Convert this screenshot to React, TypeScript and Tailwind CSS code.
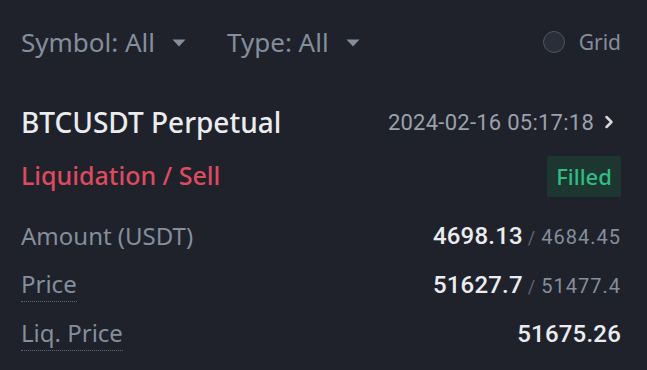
import React from 'react';
import { ChevronRight } from 'lucide-react';

const Caret = () => (
  <svg width="14" height="8" viewBox="0 0 14 8" className="ml-[17px]">
    <path d="M0.5 0.5 H13.5 L7 7.5 Z" fill="#848e9c" />
  </svg>
);

const Row = ({ label, dotted, value, sub }: { label: string; dotted?: boolean; value: string; sub?: string }) => (
  <div className="flex items-center justify-between h-[49px]">
    <span
      className={`text-[24px] text-[#848e9c] leading-[34px] ${dotted ? 'border-b border-dotted border-[#5e6673]' : ''}`}
    >
      {label}
    </span>
    <div className="flex items-baseline font-['Roboto',sans-serif]">
      <span className="text-[24px] font-medium text-[#eaecef] tracking-[0.2px]">{value}</span>
      {sub && (
        <>
          <span className="text-[18px] text-[#5e6673] ml-[5px] mr-[6px]">/</span>
          <span className="text-[20px] text-[#848e9c] tracking-[1px]">{sub}</span>
        </>
      )}
    </div>
  </div>
);

export default function App() {
  return (
    <div className="w-[647px] h-[370px] bg-[#1f222b] font-['Noto_Sans',sans-serif] pl-[21px] pr-[26px] overflow-hidden">
      <div className="flex items-center h-[85px]">
        <div className="flex items-center">
          <span className="text-[26px] text-[#848e9c]">Symbol: All</span>
          <Caret />
        </div>
        <div className="flex items-center ml-[41px]">
          <span className="text-[26px] text-[#848e9c]">Type: All</span>
          <Caret />
        </div>
        <div className="flex items-center ml-auto">
          <span className="w-[22px] h-[22px] rounded-full border border-[#4f5562] bg-[#2a2e39] -mt-[2px]" />
          <span className="text-[21px] text-[#848e9c] ml-[14px]">Grid</span>
        </div>
      </div>

      <div className="flex items-center justify-between h-[70px] pt-[4px]">
        <span className="text-[28px] font-medium text-[#eaecef]">BTCUSDT Perpetual</span>
        <div className="flex items-center text-[#9ba1ac]">
          <span className="text-[22px] font-['Roboto',sans-serif] tracking-[0.25px]">2024-02-16 05:17:18</span>
          <ChevronRight size={20} strokeWidth={3} className="ml-[5px] mr-[2px] text-[#d5d8dd]" />
        </div>
      </div>

      <div className="flex items-center justify-between h-[42px] mb-[14px]">
        <span className="text-[25px] font-medium text-[#de4a5e]">Liquidation / Sell</span>
        <span className="h-[41px] w-[74px] flex items-center justify-center bg-[#1e3630] text-[#2ebd85] text-[22px] font-medium rounded-[2px]">
          Filled
        </span>
      </div>

      <Row label="Amount (USDT)" value="4698.13" sub="4684.45" />
      <Row label="Price" dotted value="51627.7" sub="51477.4" />
      <Row label="Liq. Price" dotted value="51675.26" />
    </div>
  );
}
